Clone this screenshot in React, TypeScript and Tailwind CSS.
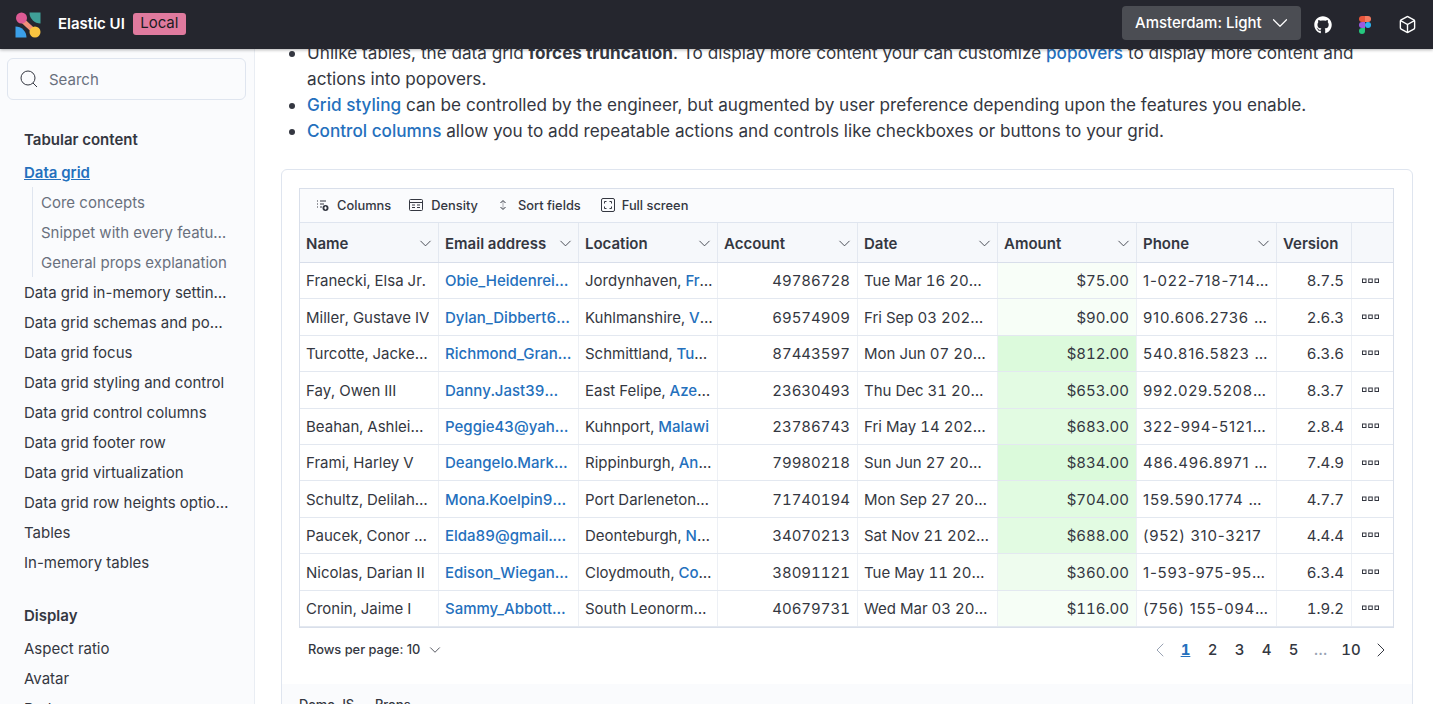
import { ChevronDown, ChevronLeft, ChevronRight, Box } from 'lucide-react';
import { FaGithub } from 'react-icons/fa';

const linkClass = 'text-[#2470bd] font-medium';

type Row = {
  name: string;
  email: string;
  city: string;
  country?: string;
  account: string;
  date: string;
  amount: string;
  amountBg: string;
  phone: string;
  version: string;
};

const rows: Row[] = [
  { name: 'Franecki, Elsa Jr.', email: 'Obie_Heidenreich@gmail.com', city: 'Jordynhaven, ', country: 'France', account: '49786728', date: 'Tue Mar 16 2021 08:12:44', amount: '$75.00', amountBg: 'bg-[#f8fef8]', phone: '1-022-718-7145 x123', version: '8.7.5' },
  { name: 'Miller, Gustave IV', email: 'Dylan_Dibbert63@yahoo.com', city: 'Kuhlmanshire, ', country: 'Vietnam', account: '69574909', date: 'Fri Sep 03 2021 10:22:01', amount: '$90.00', amountBg: 'bg-[#f7fef7]', phone: '910.606.2736 x5521', version: '2.6.3' },
  { name: 'Turcotte, Jackeline', email: 'Richmond_Grant@gmail.com', city: 'Schmittland, ', country: 'Tunisia', account: '87443597', date: 'Mon Jun 07 2021 13:40:10', amount: '$812.00', amountBg: 'bg-[#dcfadc]', phone: '540.816.5823 x8821', version: '6.3.6' },
  { name: 'Fay, Owen III', email: 'Danny.Jast39@hotmail.com', city: 'East Felipe, ', country: 'Azerbaijan', account: '23630493', date: 'Thu Dec 31 2020 17:05:36', amount: '$653.00', amountBg: 'bg-[#e3fbe3]', phone: '992.029.5208 x4410', version: '8.3.7' },
  { name: 'Beahan, Ashleigh Sr.', email: 'Peggie43@yahoo.com', city: 'Kuhnport, ', country: 'Malawi', account: '23786743', date: 'Fri May 14 2021 09:31:18', amount: '$683.00', amountBg: 'bg-[#e2fbe2]', phone: '322-994-5121 x771', version: '2.8.4' },
  { name: 'Frami, Harley V', email: 'Deangelo.Marks@gmail.com', city: 'Rippinburgh, ', country: 'Angola', account: '79980218', date: 'Sun Jun 27 2021 11:16:52', amount: '$834.00', amountBg: 'bg-[#dbfadb]', phone: '486.496.8971 x3320', version: '7.4.9' },
  { name: 'Schultz, Delilah Jr.', email: 'Mona.Koelpin98@yahoo.com', city: 'Port Darleneton, Peru', account: '71740194', date: 'Mon Sep 27 2021 15:48:29', amount: '$704.00', amountBg: 'bg-[#e1fbe1]', phone: '159.590.1774 x6201', version: '4.7.7' },
  { name: 'Paucek, Conor DVM', email: 'Elda89@gmail.com.example', city: 'Deonteburgh, ', country: 'Nigeria', account: '34070213', date: 'Sat Nov 21 2020 07:59:03', amount: '$688.00', amountBg: 'bg-[#e2fbe2]', phone: '(952) 310-3217', version: '4.4.4' },
  { name: 'Nicolas, Darian II', email: 'Edison_Wiegand@gmail.com', city: 'Cloydmouth, ', country: 'Congo', account: '38091121', date: 'Tue May 11 2021 12:27:45', amount: '$360.00', amountBg: 'bg-[#eefcee]', phone: '1-593-975-9533 x90', version: '6.3.4' },
  { name: 'Cronin, Jaime I', email: 'Sammy_Abbott12@gmail.com', city: 'South Leonormouth, Chad', account: '40679731', date: 'Wed Mar 03 2021 18:09:14', amount: '$116.00', amountBg: 'bg-[#f6fef6]', phone: '(756) 155-0942 x118', version: '1.9.2' },
];

const navGroups = [
  {
    title: 'Tabular content',
    items: [
      { label: 'Data grid', active: true },
      { label: 'Core concepts', sub: true },
      { label: 'Snippet with every feature', sub: true },
      { label: 'General props explanation', sub: true },
      { label: 'Data grid in-memory settings' },
      { label: 'Data grid schemas and popovers' },
      { label: 'Data grid focus' },
      { label: 'Data grid styling and control' },
      { label: 'Data grid control columns' },
      { label: 'Data grid footer row' },
      { label: 'Data grid virtualization' },
      { label: 'Data grid row heights options' },
      { label: 'Tables' },
      { label: 'In-memory tables' },
    ],
  },
  {
    title: 'Display',
    items: [{ label: 'Aspect ratio' }, { label: 'Avatar' }, { label: 'Badge' }],
  },
];

const Logo = () => (
  <svg width="26" height="26" viewBox="0 0 26 26" className="shrink-0">
    <path d="M6 7 L20 20" stroke="#f08f78" strokeWidth="5" />
    <circle cx="6.5" cy="6" r="5.5" fill="#dd5a94" />
    <path d="M14.5 0.5 H25.5 V11.5 A11 11 0 0 1 14.5 0.5 Z" fill="#3f9f97" />
    <path d="M0.5 25.5 V14.5 A11 11 0 0 1 11.5 25.5 Z" fill="#3b9fe8" />
    <circle cx="20" cy="20" r="5.5" fill="#f9c440" />
  </svg>
);

const FigmaLogo = () => (
  <svg width="12" height="18" viewBox="0 0 12 18">
    <path d="M0 3a3 3 0 0 1 3-3h3v6H3a3 3 0 0 1-3-3z" fill="#e8553b" />
    <path d="M6 0h3a3 3 0 0 1 0 6H6z" fill="#f47a60" />
    <path d="M0 9a3 3 0 0 1 3-3h3v6H3a3 3 0 0 1-3-3z" fill="#9a5be0" />
    <circle cx="9" cy="9" r="3" fill="#2fb2ef" />
    <path d="M0 15a3 3 0 0 1 3-3h3v3a3 3 0 0 1-6 0z" fill="#25c77e" />
  </svg>
);

const ColumnsIcon = () => (
  <svg width="14" height="14" viewBox="0 0 14 14" fill="none" stroke="#343741">
    <path d="M1 3h1M1 6h1M1 9h1M4 3h6M4 6h4M4 9h2" />
    <circle cx="9.5" cy="10" r="3" fill="#343741" stroke="none" />
    <path d="M8 10h3M9.5 8.5v3" stroke="#fff" />
  </svg>
);

const DensityIcon = () => (
  <svg width="14" height="14" viewBox="0 0 14 14" fill="none" stroke="#343741">
    <rect x="0.5" y="1.5" width="13" height="11" rx="1" />
    <path d="M1 4.5h12M3 7h3M8 7h3M3 9.5h3M8 9.5h3" />
  </svg>
);

const SortIcon = () => (
  <svg width="14" height="14" viewBox="0 0 14 14" fill="none" stroke="#343741">
    <path d="M4.5 5 7 2.5 9.5 5M4.5 9 7 11.5 9.5 9" />
    <path d="M7 3v8" strokeOpacity="0.4" />
  </svg>
);

const FullScreenIcon = () => (
  <svg width="14" height="14" viewBox="0 0 14 14" fill="none" stroke="#343741">
    <rect x="0.5" y="0.5" width="13" height="13" rx="1.5" />
    <path d="M3.5 5.5v-2h2M8.5 3.5h2v2M10.5 8.5v2h-2M5.5 10.5h-2v-2" />
  </svg>
);

const SearchIcon = () => (
  <svg width="18" height="18" viewBox="0 0 18 18" fill="none" stroke="#343741" strokeWidth="1">
    <circle cx="8" cy="8" r="7" />
    <path d="M13 13l4 4" />
  </svg>
);

const DotsIcon = () => (
  <svg width="17" height="6" viewBox="0 0 17 6" fill="none" stroke="#343741">
    <rect x="0.5" y="1" width="3.5" height="3.5" />
    <rect x="6.75" y="1" width="3.5" height="3.5" />
    <rect x="13" y="1" width="3.5" height="3.5" />
  </svg>
);

const Header = () => (
  <header className="h-[49px] shrink-0 bg-[#25262e] flex items-center pl-[15px] pr-[16px] shadow-[0_1px_3px_rgba(0,0,0,0.3)] z-10">
    <Logo />
    <span className="ml-[17px] text-white text-[15px] font-semibold">Elastic UI</span>
    <span className="ml-[8px] mb-[2px] h-[22px] w-[53px] rounded-[3px] bg-[#e07a9e] text-[#1a1c21] text-[15px] flex items-center justify-center">Local</span>
    <button className="ml-auto mb-[3px] h-[34px] w-[179px] rounded-[4px] bg-[#4b4d53] text-white text-[15px] font-medium flex items-center pl-[13px]">
      Amsterdam: Light
      <ChevronDown size={26} strokeWidth={1.1} className="ml-[5px]" />
    </button>
    <FaGithub size={18} className="ml-[13px] text-white" />
    <span className="ml-[27px]"><FigmaLogo /></span>
    <Box size={19} strokeWidth={1.75} className="ml-[27px] text-white" />
  </header>
);

const Sidebar = () => (
  <aside className="w-[255px] shrink-0 bg-[#fafbfd] border-r border-[#e9edf3] px-[7px] pt-[9px] overflow-hidden shadow-[1px_0_4px_rgba(0,0,0,0.04)]">
    <div className="h-[42px] w-[239px] rounded-[6px] border border-[#dfe5ef] flex items-center pl-[12px] gap-[11px] text-[15px] text-[#69707d]">
      <SearchIcon />
      <span className="mt-[2px]">Search</span>
    </div>
    <nav className="mt-[24px] pl-[17px] pr-[17px]">
      {navGroups.map((group) => (
        <div key={group.title} className="mb-[23px]">
          <h3 className="h-[30px] mb-[3px] leading-[32px] text-[15px] font-semibold text-[#343741]">{group.title}</h3>
          {group.items.map((item) => (
            <div
              key={item.label}
              className={
                item.sub
                  ? 'h-[30px] leading-[31px] ml-[8px] pl-[8px] pr-[3px] border-l border-[#dfe5ef] text-[15px] text-[#69707d] truncate'
                  : item.active
                    ? 'h-[30px] leading-[31px] text-[15px] font-semibold text-[#2470bd] underline truncate'
                    : 'h-[30px] leading-[31px] text-[15px] text-[#343741] truncate'
              }
            >
              {item.label}
            </div>
          ))}
        </div>
      ))}
    </nav>
  </aside>
);

const columns = [
  { label: 'Name', w: 'w-[139px]', sort: true },
  { label: 'Email address', w: 'w-[140px]', sort: true },
  { label: 'Location', w: 'w-[139px]', sort: true },
  { label: 'Account', w: 'w-[140px]', sort: true },
  { label: 'Date', w: 'w-[140px]', sort: true },
  { label: 'Amount', w: 'w-[139px]', sort: true },
  { label: 'Phone', w: 'w-[140px]', sort: true },
  { label: 'Version', w: 'w-[75px]', sort: false },
  { label: '', w: 'w-[42px]', sort: false },
];

const cellClass = 'h-full pt-[2px] pl-[6px] flex items-center border-r border-[#edf0f5] text-[15px] text-[#343741] shrink-0';

const GridRow = ({ row }: { row: Row }) => (
  <div className="h-[36.4px] flex border-b border-[#e3e8f0] tabular-nums">
    <div className={`${cellClass} w-[139px] pr-[7px]`}><span className="truncate">{row.name}</span></div>
    <div className={`${cellClass} w-[140px] pr-[6px]`}><span className={`truncate ${linkClass}`}>{row.email}</span></div>
    <div className={`${cellClass} w-[139px] pr-[4px]`}>
      <span className="truncate">
        {row.city}
        {row.country && <a className={linkClass}>{row.country}</a>}
      </span>
    </div>
    <div className={`${cellClass} w-[140px] pr-[7px] justify-end`}>{row.account}</div>
    <div className={`${cellClass} w-[140px] pr-[6px]`}><span className="truncate">{row.date}</span></div>
    <div className={`${cellClass} w-[139px] pr-[7px] justify-end ${row.amountBg}`}>{row.amount}</div>
    <div className={`${cellClass} w-[140px] pr-[6px]`}><span className="truncate [font-variant-numeric:normal] tracking-[0.8px]">{row.phone}</span></div>
    <div className={`${cellClass} w-[75px] pr-[7px] justify-end`}>{row.version}</div>
    <div className="h-full flex-1 pl-[10px] flex items-center"><DotsIcon /></div>
  </div>
);

const DataGrid = () => (
  <div className="border border-[#d9dfea] w-[1095px]">
    <div className="h-[34px] bg-[#fafbfd] flex items-center pl-[16px] gap-[18px] text-[12.85px] font-medium text-[#343741] border-b border-[#dfe5ef]">
      <span className="flex items-center gap-[7px]"><ColumnsIcon />Columns</span>
      <span className="flex items-center gap-[8px]"><DensityIcon />Density</span>
      <span className="flex items-center gap-[8px]"><SortIcon />Sort fields</span>
      <span className="ml-[2px] flex items-center gap-[7px]"><FullScreenIcon />Full screen</span>
    </div>
    <div className="h-[40px] flex bg-[#f6f8fb] border-b border-[#d8deea]">
      {columns.map((col, i) => (
        <div
          key={i}
          className={`${col.w} ${i === columns.length - 1 ? 'flex-1' : 'border-r border-[#e3e8f0]'} h-full pl-[6px] pr-[3px] flex items-center justify-between text-[15px] font-semibold text-[#343741] shrink-0`}
        >
          <span className="mt-[3px]">{col.label}</span>
          {col.sort && <ChevronDown size={19} strokeWidth={1.1} className="mt-[1px]" />}
        </div>
      ))}
    </div>
    {rows.map((row) => (
      <GridRow key={row.name} row={row} />
    ))}
  </div>
);

const Pagination = () => (
  <div className="h-[44px] w-[1095px] flex items-center justify-between pl-[9px] pr-[1px]">
    <span className="flex items-center gap-[6px] text-[12.85px] font-medium text-[#343741]">
      Rows per page: 10
      <ChevronDown size={18} strokeWidth={1.1} />
    </span>
    <div className="flex items-center text-[15px] text-[#343741] font-medium tabular-nums">
      <ChevronLeft size={24} strokeWidth={1} className="text-[#98a2b3]" />
      <span className="w-[27px] text-center"><span className="font-bold text-[#2470bd] underline">1</span></span>
      <span className="w-[27px] text-center">2</span>
      <span className="w-[27px] text-center">3</span>
      <span className="w-[27px] text-center">4</span>
      <span className="w-[27px] text-center">5</span>
      <span className="w-[27px] text-center text-[#98a2b3]">…</span>
      <span className="w-[34px] text-center">10</span>
      <ChevronRight size={24} strokeWidth={1} className="ml-[1px]" />
    </div>
  </div>
);

const Content = () => (
  <main className="flex-1 bg-white overflow-hidden pl-[26px]">
    <ul className="-mt-[9px] w-[1085px] list-disc pl-[26px] text-[17.16px] leading-[26px] text-[#343741]">
      <li>
        Unlike tables, the data grid <strong className="font-bold">forces truncation</strong>. To display more content your can customize{' '}
        <a className={linkClass}>popovers</a> to display more content and actions into popovers.
      </li>
      <li><a className={linkClass}>Grid styling</a> can be controlled by the engineer, but augmented by user preference depending upon the features you enable.</li>
      <li><a className={linkClass}>Control columns</a> allow you to add repeatable actions and controls like checkboxes or buttons to your grid.</li>
    </ul>
    <section className="mt-[25px] w-[1132px] rounded-[6px] border border-[#dfe5ef] pt-[18px] pl-[17px]">
      <DataGrid />
      <Pagination />
      <div className="mt-[12px] -ml-[17px] h-[40px] bg-[#fafbfd] pl-[17px] pt-[11px] flex gap-[21px] text-[12.85px] font-medium text-[#343741]">
        <span>Demo JS</span>
        <span>Props</span>
      </div>
    </section>
  </main>
);

export default function App() {
  return (
    <div className="h-[704px] overflow-hidden flex flex-col bg-white font-['Inter',sans-serif]">
      <Header />
      <div className="flex-1 flex min-h-0">
        <Sidebar />
        <Content />
      </div>
    </div>
  );
}
